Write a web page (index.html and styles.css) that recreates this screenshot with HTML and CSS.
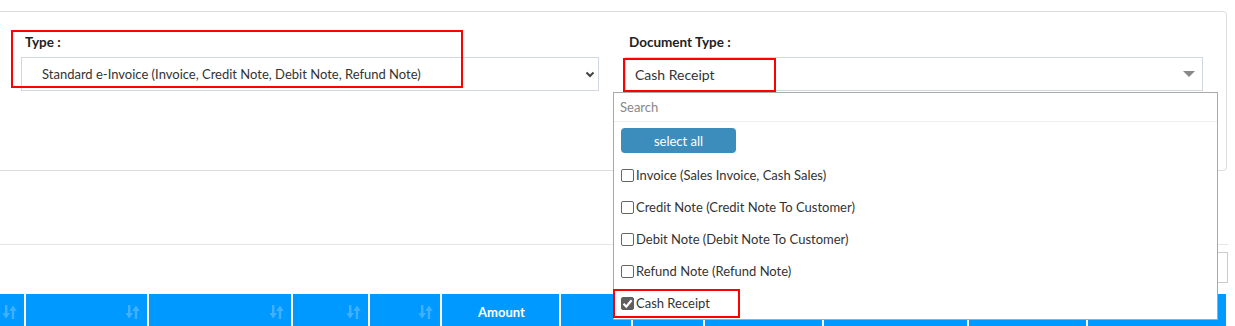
FILE: index.html
```html
<!DOCTYPE html>
<html lang="en">
<head>
    <meta charset="UTF-8">
    <meta name="viewport" content="width=device-width, initial-scale=1.0">
    <title>e-Invoice Submission</title>
    <link rel="stylesheet" href="styles.css">
</head>
<body>

    <!-- 篩選區 -->
    <div class="filter-card">
        <div class="filter-row">
            <div class="field">
                <label class="field-label">Type :</label>
                <div class="select-box select-type">
                    <span class="select-text">Standard e-Invoice (Invoice, Credit Note, Debit Note, Refund Note)</span>
                    <svg class="chevron" width="10" height="7" viewBox="0 0 10 7"><path d="M1.5 1.5 L5 5 L8.5 1.5" fill="none" stroke="#444" stroke-width="2"/></svg>
                </div>
                <div class="mark mark-type"></div>
            </div>

            <div class="field">
                <label class="field-label">Document Type :</label>
                <div class="multiselect">
                    <div class="select-box select-doc">
                        <span class="select-text">Cash Receipt</span>
                        <svg class="caret" width="12" height="6" viewBox="0 0 12 6"><path d="M0 0 H12 L6 6 Z" fill="#888"/></svg>
                    </div>
                    <div class="mark mark-doc"></div>

                    <!-- 下拉選單 -->
                    <div class="dropdown">
                        <div class="dd-search">Search</div>
                        <div class="dd-actions">
                            <button class="btn-select-all">select all</button>
                        </div>
                        <ul class="dd-options">
                            <li class="dd-option"><span class="check"></span>Invoice (Sales Invoice, Cash Sales)</li>
                            <li class="dd-option"><span class="check"></span>Credit Note (Credit Note To Customer)</li>
                            <li class="dd-option"><span class="check"></span>Debit Note (Debit Note To Customer)</li>
                            <li class="dd-option"><span class="check"></span>Refund Note (Refund Note)</li>
                            <li class="dd-option">
                                <span class="check checked"><svg width="11" height="11" viewBox="0 0 11 11"><path d="M1.5 5.8 L4.3 8.6 L9.6 2.2" fill="none" stroke="#fff" stroke-width="2.2"/></svg></span>Cash Receipt
                                <div class="mark mark-option"></div>
                            </li>
                        </ul>
                    </div>
                </div>
            </div>
        </div>
    </div>

    <!-- 表格工具列 -->
    <div class="table-tools">
        <input class="table-search" type="text">
    </div>

    <!-- 表頭 -->
    <div class="grid-head">
        <div class="th w24"><svg class="sort"><use href="#sort-icon"/></svg></div>
        <div class="th w121"><svg class="sort"><use href="#sort-icon"/></svg></div>
        <div class="th w142"><svg class="sort"><use href="#sort-icon"/></svg></div>
        <div class="th w75"><svg class="sort"><use href="#sort-icon"/></svg></div>
        <div class="th w70"><svg class="sort"><use href="#sort-icon"/></svg></div>
        <div class="th w117 th-center">Amount</div>
        <div class="th w70"></div>
        <div class="th w70"></div>
        <div class="th w117"></div>
        <div class="th w143"></div>
        <div class="th w117"></div>
        <div class="th th-last"></div>
    </div>

    <svg width="0" height="0" style="position:absolute">
        <symbol id="sort-icon" viewBox="0 0 15 14">
            <path d="M3 0 H5.4 V8 H8 L4.2 13.5 L0.4 8 H3 Z" fill="currentColor"/>
            <path d="M11 0.5 L14.8 6 H12.2 V14 H9.8 V6 H7.2 Z" fill="currentColor"/>
        </symbol>
    </svg>

</body>
</html>
```

FILE: styles.css
```css
/* 基本頁面樣式 */
body {
    margin: 0;
    font-family: Lato, "Noto Sans", Arial, sans-serif;
    font-size: 13px;
    color: #333;
    background-color: #fff;
}

/* --- 篩選卡片 --- */
.filter-card {
    position: relative;
    z-index: 2;
    box-sizing: border-box;
    height: 160px;
    margin: 11px 8px 0 -5px;
    padding: 20px 23px 0 25px;
    border: 1px solid #dcdcdc;
    border-radius: 0 4px 4px 0;
}

.filter-row {
    display: grid;
    grid-template-columns: 1fr 1fr;
    gap: 26px;
}

.field { position: relative; }

.field-label {
    display: block;
    padding-left: 4px;
    margin-bottom: 5px;
    line-height: 20px;
    font-size: 13.5px;
    font-weight: 700;
    color: #222;
}

.select-box {
    box-sizing: border-box;
    height: 34px;
    display: flex;
    align-items: center;
    border: 1px solid #d2d6de;
    background-color: #fff;
}
.select-text { flex-grow: 1; white-space: nowrap; }

.select-type { padding: 0 3px 0 20px; }
.select-doc { padding: 0 7px 0 9px; }
.select-doc .select-text { font-size: 14px; }

.multiselect { position: relative; }

/* 紅框標記 */
.mark {
    position: absolute;
    border: 2px solid #f00;
    pointer-events: none;
    z-index: 10;
}
.mark-type { left: -10px; top: -2px; width: 448px; height: 54px; }
.mark-doc { left: -2px; top: 1px; width: 149px; height: 30px; }
.mark-option { left: -1px; top: 2px; width: 123px; height: 25px; }

/* --- 下拉選單 --- */
.dropdown {
    position: absolute;
    top: calc(100% + 1px);
    left: -12px;
    width: 605px;
    box-sizing: border-box;
    border: 1px solid #a9a9a9;
    background-color: #fff;
    z-index: 5;
}

.dd-search {
    height: 28px;
    line-height: 28px;
    padding: 0 6px;
    color: #888;
    border-bottom: 1px solid #eee;
}

.dd-actions { padding: 6px 7px 0; }

.btn-select-all {
    width: 115px;
    height: 25px;
    border: none;
    border-radius: 4px;
    background-color: #3c8dbc;
    color: #fff;
    font-family: inherit;
    font-size: 13px;
    cursor: pointer;
}

.dd-options {
    list-style: none;
    margin: 6px 0 0;
    padding: 0;
}

.dd-option {
    position: relative;
    height: 32px;
    display: flex;
    align-items: center;
    padding-left: 7px;
    gap: 2px;
    font-size: 13px;
    color: #333;
}

.check {
    box-sizing: border-box;
    width: 13px;
    height: 13px;
    border: 1px solid #666;
    border-radius: 2px;
    background-color: #fff;
    display: flex;
    align-items: center;
    justify-content: center;
}
.check.checked { background-color: #5f5f5f; border-color: #5f5f5f; }

/* --- 表格工具列 --- */
.table-tools {
    margin: 73px 7px 11px 0;
    padding-top: 7px;
    border-top: 1px solid #e6e6e6;
}
.table-search {
    display: block;
    box-sizing: border-box;
    width: 220px;
    height: 31px;
    margin-left: auto;
    border: 1px solid #ccc;
}

/* --- 表頭 --- */
.grid-head {
    display: flex;
    gap: 2px;
    margin-right: 9px;
}

.th {
    flex-shrink: 0;
    height: 36px;
    box-sizing: border-box;
    display: flex;
    align-items: center;
    justify-content: flex-end;
    padding-right: 7px;
    background-color: #0099ff;
    color: #fff;
    font-weight: 700;
}
.th-center { justify-content: center; padding: 0 0 0 2px; }
.th-last { flex: 1; }

.w24 { width: 24px; }
.w70 { width: 70px; }
.w75 { width: 75px; }
.w117 { width: 117px; }
.w121 { width: 121px; }
.w142 { width: 142px; }
.w143 { width: 143px; }

.sort {
    width: 15px;
    height: 14px;
    color: #3fb0ff;
}
```
